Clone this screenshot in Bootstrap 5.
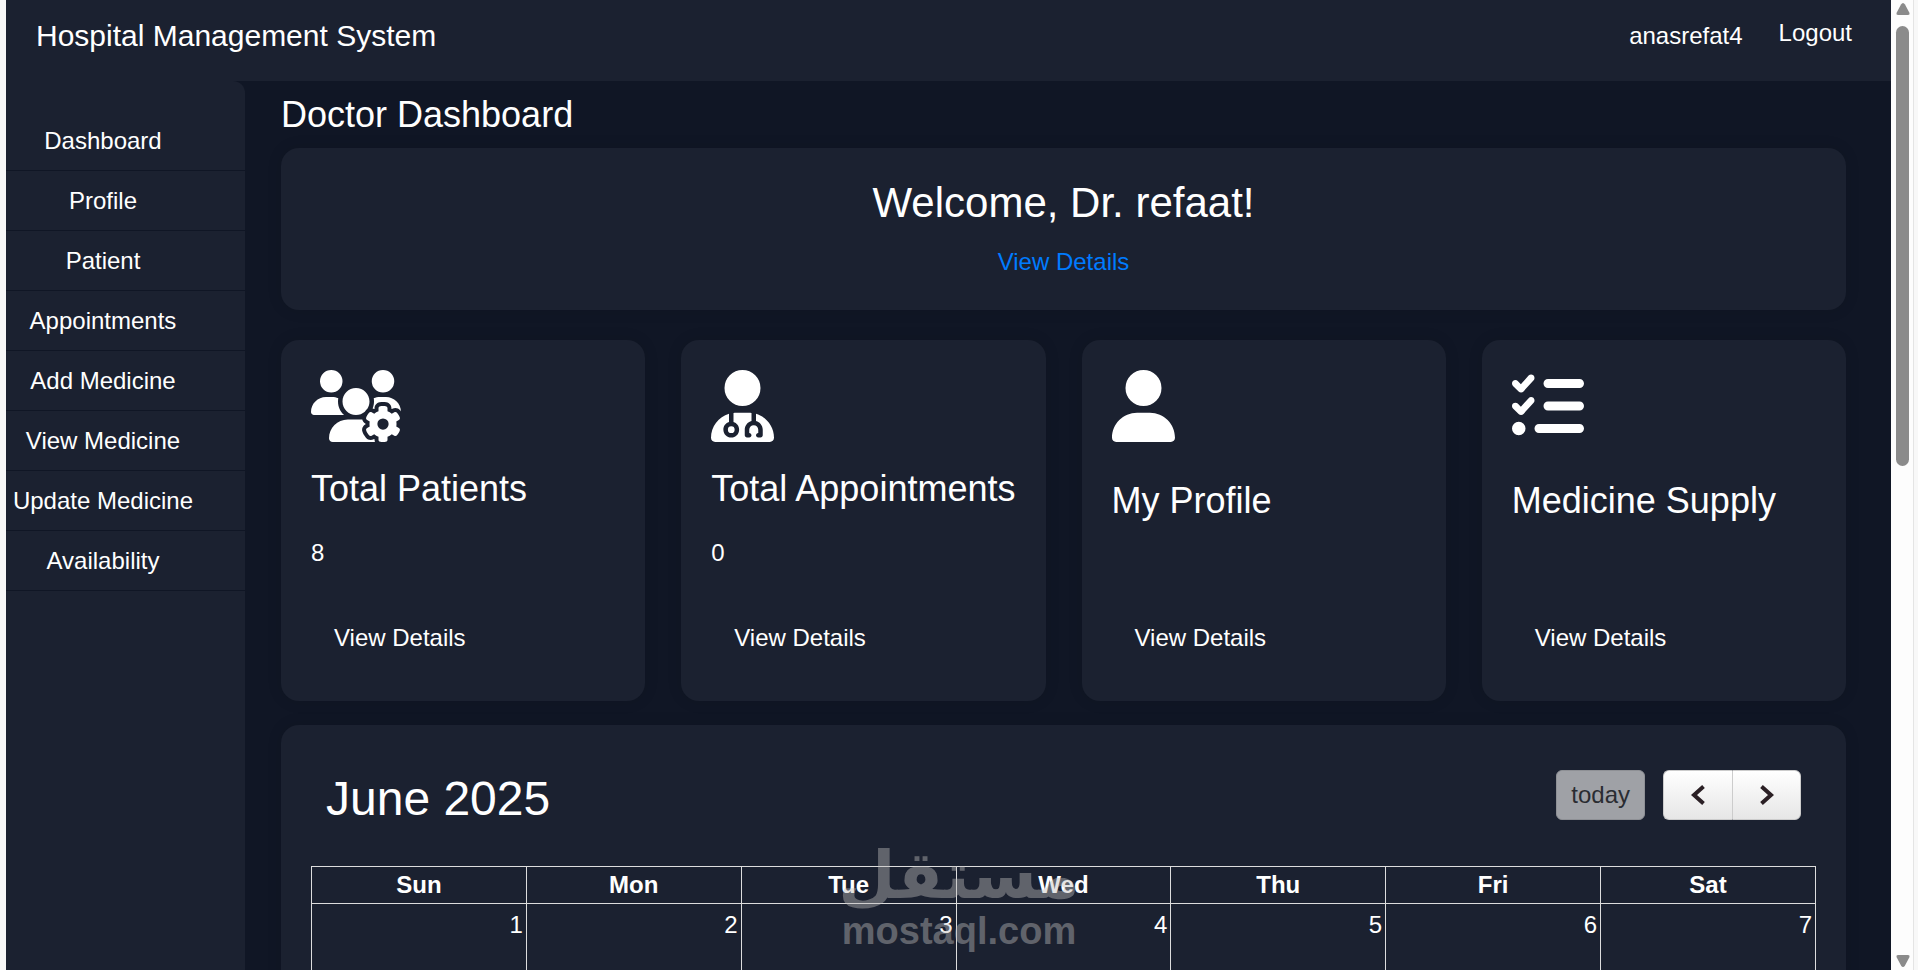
<!DOCTYPE html>
<html lang="en">
<head>
<meta charset="utf-8">
<meta name="viewport" content="width=device-width, initial-scale=1">
<title>Doctor Dashboard</title>
<link href="https://cdn.jsdelivr.net/npm/bootstrap@5.3.0/dist/css/bootstrap.min.css" rel="stylesheet">
<style>
:root { --panel: #1b2130; --page: #101625; }
body { font-family: "Liberation Sans", Arial, sans-serif; font-size: 24px; line-height: 36px; color: #fff; background: var(--page); }
h1, h2, h3, h4, p, ul { margin: 0; }
h1, h2, h3, h4 { font-weight: 400; }
a { text-decoration: none; }
.edge { width: 6px; background: #f8f8f8; }
.topbar { height: 81px; padding: 15px 39px 0 30px; background: var(--panel); }
.brand { font-size: 30px; padding-top: 3px; color: #fff; }
.user-name { padding-top: 3px; }
.side { width: 239px; padding-top: 30px; background: var(--panel); border-top-right-radius: 12px; }
.side li { border-bottom: 1px solid var(--page); }
.side .nav-link { padding: 12px 0 11px; margin-right: 45px; text-align: center; color: #fff; white-space: nowrap; }
.content { padding: 12px 45px 0 36px; }
.page-title { font-size: 36px; line-height: 43px; margin-bottom: 12px; }
.panel { background: var(--panel); border-radius: 18px; padding: 30px; box-shadow: 0 0 15px rgba(0, 0, 0, .1); }
.welcome { margin-bottom: 30px; }
.welcome h2 { font-size: 42px; line-height: 50px; margin-bottom: 16px; }
.welcome a { color: #007bff; }
.stats { --bs-gutter-x: 36px; margin-bottom: 24px; }
.stat-icon { height: 72px; display: block; fill: #fff; align-self: flex-start; }
.stat-title { font-size: 36px; line-height: 43px; margin-top: 25px; white-space: nowrap; }
.plain .stat-title { margin-top: 37px; }
.stat-value { margin: 25px 0 34px; }
.stat-link { padding: 15px 23px; color: #fff; }
.calendar { border-radius: 18px 18px 0 0; }
.cal-bar { padding: 15px; margin-bottom: 23px; }
.cal-bar h2 { font-size: 48px; line-height: 58px; }
.cal-btn { height: 50px; border: 1px solid #ccc; background: linear-gradient(#fff, #e6e6e6); color: #333; border-radius: 6px; padding: 0 14px; }
.cal-btn:disabled { opacity: .65; background: #e6e6e6; color: #333; border-color: #ccc; }
.cal-btn.arrow { width: 69px; }
.cal-btn svg { display: block; margin: auto; fill: none; stroke: #2b2025; stroke-width: 4; }
.today { margin-right: 18px; }
.month { width: 100%; table-layout: fixed; border-collapse: collapse; }
.month th, .month td { border: 1px solid #ddd; }
.month th { text-align: center; padding: 0; }
.month td { text-align: right; vertical-align: top; padding: 3px 3px 0; height: 150px; }
.watermark { position: absolute; left: 50%; bottom: 20px; transform: translateX(-50%); color: #c0bebe; opacity: .42; font-weight: 700; text-align: center; pointer-events: none; }
.watermark .word { font-family: "DejaVu Sans", sans-serif; font-size: 66px; line-height: 72px; }
.watermark .site { font-size: 38px; line-height: 38px; }
.scroller { width: 27px; padding: 3px 9px 3px 5px; background: linear-gradient(90deg, #fdfdfd 22px, #e4e4e4 22px, #e4e4e4 23px, #f8f8f8 23px); }
.scroller .thumb { width: 13px; height: 45.6%; margin-top: 11px; border-radius: 7px; background: #8b8b8b; }
.scroller svg { fill: #8b8b8b; display: block; }
</style>
</head>
<body class="vh-100 overflow-hidden">
<div class="d-flex h-100 position-relative">
  <div class="edge flex-shrink-0"></div>
  <div class="flex-grow-1 d-flex flex-column overflow-hidden">
    <header class="topbar d-flex align-items-start flex-shrink-0">
      <a class="brand me-auto" href="#">Hospital Management System</a>
      <span class="user-name me-4 pe-2">anasrefat4</span>
      <a class="text-white ps-1" href="#">Logout</a>
    </header>
    <div class="d-flex flex-grow-1 overflow-hidden">
      <nav class="side flex-shrink-0">
        <ul class="list-unstyled">
          <li><a class="nav-link" href="#">Dashboard</a></li>
          <li><a class="nav-link" href="#">Profile</a></li>
          <li><a class="nav-link" href="#">Patient</a></li>
          <li><a class="nav-link" href="#">Appointments</a></li>
          <li><a class="nav-link" href="#">Add Medicine</a></li>
          <li><a class="nav-link" href="#">View Medicine</a></li>
          <li><a class="nav-link" href="#">Update Medicine</a></li>
          <li><a class="nav-link" href="#">Availability</a></li>
        </ul>
      </nav>
      <main class="content flex-grow-1">
        <h1 class="page-title">Doctor Dashboard</h1>
        <section class="panel welcome text-center">
          <h2>Welcome, Dr. refaat!</h2>
          <a class="d-block" href="#">View Details</a>
        </section>
        <div class="row row-cols-4 stats">
          <div class="col">
            <section class="panel h-100 d-flex flex-column align-items-start">
              <svg class="stat-icon" viewBox="0 0 640 512"><path d="M144 160A80 80 0 1 0 144 0a80 80 0 1 0 0 160zm368 0A80 80 0 1 0 512 0a80 80 0 1 0 0 160zM0 298.7C0 310.4 9.6 320 21.3 320H234.7c.2 0 .4 0 .7 0c-26.6-23.5-43.3-57.8-43.3-96c0-7.6 .7-15 1.9-22.3c-13.6-6.3-28.7-9.7-44.6-9.7H106.7C47.8 192 0 239.8 0 298.7zM320 320c24 0 45.9-8.8 62.7-23.3c2.5-3.7 5.2-7.3 8-10.7c2.7-3.3 5.7-6.1 9-8.3C410 262.3 416 243.9 416 224c0-53-43-96-96-96s-96 43-96 96s43 96 96 96zm65.4 60.2c-10.3-5.9-18.1-16.2-20.8-28.2H261.3C187.7 352 128 411.7 128 485.3c0 14.7 11.9 26.7 26.7 26.7H455.2c-2.1-5.2-3.2-10.9-3.2-16.4v-3c-1.3-.7-2.7-1.5-4-2.3l-2.6 1.5c-16.8 9.7-40.5 8-54.7-9.7c-4.5-5.6-8.6-11.5-12.4-17.6l-.1-.2-.1-.2-2.4-4.1-.1-.2-.1-.2c-3.4-6.2-6.4-12.6-9-19.3c-8.2-21.2 2.2-42.6 19-52.3l2.7-1.5c0-.8 0-1.5 0-2.3s0-1.5 0-2.3l-2.7-1.5zM533.3 192H490.7c-15.9 0-31 3.5-44.6 9.7c1.3 7.2 1.9 14.7 1.9 22.3c0 17.4-3.5 33.9-9.7 49c2.5 .9 4.9 2 7.1 3.3l2.6 1.5c1.3-.8 2.6-1.6 4-2.3v-3c0-19.4 13.3-39.1 35.8-42.6c7.9-1.2 16-1.9 24.2-1.9s16.3 .6 24.2 1.9c22.5 3.5 35.8 23.2 35.8 42.6v3c1.3 .7 2.7 1.5 4 2.3l2.6-1.5c16.8-9.7 40.5-8 54.7 9.7c2.3 2.8 4.5 5.8 6.6 8.7c-2.1-57.1-49-102.7-106.6-102.7zm91.3 163.9c6.3-3.6 9.5-11.1 6.8-18c-2.1-5.5-4.6-10.8-7.4-15.9l-2.3-4c-3.1-5.1-6.5-9.9-10.2-14.5c-4.6-5.7-12.7-6.7-19-3L574.4 311c-8.9-7.6-19.1-13.6-30.4-17.6v-21c0-7.3-4.9-13.8-12.1-14.9c-6.5-1-13.1-1.5-19.9-1.5s-13.4 .5-19.9 1.5c-7.2 1.1-12.1 7.6-12.1 14.9v21c-11.2 4-21.5 10-30.4 17.6l-18.2-10.5c-6.3-3.6-14.4-2.6-19 3c-3.7 4.6-7.1 9.5-10.2 14.6l-2.3 3.9c-2.8 5.1-5.3 10.4-7.4 15.9c-2.6 6.8 .5 14.3 6.8 17.9l18.2 10.5c-1 5.7-1.6 11.6-1.6 17.6s.6 11.9 1.6 17.5l-18.2 10.5c-6.3 3.6-9.5 11.1-6.8 17.9c2.1 5.5 4.6 10.7 7.4 15.8l2.4 4.1c3 5.1 6.4 9.9 10.1 14.5c4.6 5.7 12.7 6.7 19 3L449.6 457c8.9 7.6 19.2 13.6 30.4 17.6v21c0 7.3 4.9 13.8 12.1 14.9c6.5 1 13.1 1.5 19.9 1.5s13.4-.5 19.9-1.5c7.2-1.1 12.1-7.6 12.1-14.9v-21c11.2-4 21.5-10 30.4-17.6l18.2 10.5c6.3 3.6 14.4 2.6 19-3c3.7-4.6 7.1-9.4 10.1-14.5l2.4-4.2c2.8-5.1 5.3-10.3 7.4-15.8c2.6-6.8-.5-14.3-6.8-17.9l-18.2-10.5c1-5.7 1.6-11.6 1.6-17.5s-.6-11.9-1.6-17.6l18.2-10.5zM472 384a40 40 0 1 1 80 0 40 40 0 1 1 -80 0z"/></svg>
              <h3 class="stat-title">Total Patients</h3>
              <p class="stat-value">8</p>
              <a class="stat-link mt-auto" href="#">View Details</a>
            </section>
          </div>
          <div class="col">
            <section class="panel h-100 d-flex flex-column align-items-start">
              <svg class="stat-icon" viewBox="0 0 448 512"><path d="M224 256A128 128 0 1 0 224 0a128 128 0 1 0 0 256zm-96 55.2C54 332.9 0 401.3 0 482.3C0 498.7 13.3 512 29.7 512H418.3c16.4 0 29.7-13.3 29.7-29.7c0-81-54-149.4-128-171.1V362c27.6 7.1 48 32.2 48 62v40c0 8.8-7.2 16-16 16H336c-8.8 0-16-7.2-16-16s7.2-16 16-16V424c0-17.7-14.3-32-32-32s-32 14.3-32 32v24c8.8 0 16 7.2 16 16s-7.2 16-16 16H256c-8.8 0-16-7.2-16-16V424c0-29.8 20.4-54.9 48-62V304.9c-6-.6-12.1-.9-18.3-.9H178.3c-6.2 0-12.3 .3-18.3 .9v65.4c23.1 6.9 40 28.3 40 53.7c0 30.9-25.1 56-56 56s-56-25.1-56-56c0-25.4 16.9-46.8 40-53.7V311.2zM144 448a24 24 0 1 0 0-48 24 24 0 1 0 0 48z"/></svg>
              <h3 class="stat-title">Total Appointments</h3>
              <p class="stat-value">0</p>
              <a class="stat-link mt-auto" href="#">View Details</a>
            </section>
          </div>
          <div class="col">
            <section class="panel plain h-100 d-flex flex-column align-items-start">
              <svg class="stat-icon" viewBox="0 0 448 512"><path d="M224 256A128 128 0 1 0 224 0a128 128 0 1 0 0 256zm-45.7 48C79.8 304 0 383.8 0 482.3C0 498.7 13.3 512 29.7 512H418.3c16.4 0 29.7-13.3 29.7-29.7C448 383.8 368.2 304 269.7 304H178.3z"/></svg>
              <h3 class="stat-title">My Profile</h3>
              <a class="stat-link mt-auto" href="#">View Details</a>
            </section>
          </div>
          <div class="col">
            <section class="panel plain h-100 d-flex flex-column align-items-start">
              <svg class="stat-icon" viewBox="0 0 512 512"><path d="M152.1 38.2c9.9 8.9 10.7 24 1.8 33.9l-72 80c-4.4 4.9-10.6 7.8-17.2 7.9s-12.9-2.4-17.6-7L7 113C-2.3 103.6-2.3 88.4 7 79s24.6-9.4 33.9 0l22.1 22.1 55.1-61.2c8.9-9.9 24-10.7 33.9-1.8zm0 160c9.9 8.9 10.7 24 1.8 33.9l-72 80c-4.4 4.9-10.6 7.8-17.2 7.9s-12.9-2.4-17.6-7L7 273c-9.4-9.4-9.4-24.6 0-33.9s24.6-9.4 33.9 0l22.1 22.1 55.1-61.2c8.9-9.9 24-10.7 33.9-1.8zM224 96c0-17.7 14.3-32 32-32H480c17.7 0 32 14.3 32 32s-14.3 32-32 32H256c-17.7 0-32-14.3-32-32zm0 160c0-17.7 14.3-32 32-32H480c17.7 0 32 14.3 32 32s-14.3 32-32 32H256c-17.7 0-32-14.3-32-32zM160 416c0-17.7 14.3-32 32-32H480c17.7 0 32 14.3 32 32s-14.3 32-32 32H192c-17.7 0-32-14.3-32-32zM48 368a48 48 0 1 1 0 96 48 48 0 1 1 0-96z"/></svg>
              <h3 class="stat-title">Medicine Supply</h3>
              <a class="stat-link mt-auto" href="#">View Details</a>
            </section>
          </div>
        </div>
        <section class="panel calendar">
          <div class="cal-bar d-flex align-items-start">
            <h2 class="me-auto">June 2025</h2>
            <button class="cal-btn today" type="button" disabled>today</button>
            <div class="d-flex">
              <button class="cal-btn arrow rounded-end-0 border-end-0" type="button" aria-label="Previous month"><svg width="14" height="20" viewBox="0 0 14 20"><path d="M12.500 1.500L3 10l9.500 8.500"/></svg></button>
              <button class="cal-btn arrow rounded-start-0" type="button" aria-label="Next month"><svg width="14" height="20" viewBox="0 0 14 20"><path d="M1.500 1.500L11 10l-9.500 8.500"/></svg></button>
            </div>
          </div>
          <table class="month">
            <thead>
              <tr><th>Sun</th><th>Mon</th><th>Tue</th><th>Wed</th><th>Thu</th><th>Fri</th><th>Sat</th></tr>
            </thead>
            <tbody>
              <tr><td>1</td><td>2</td><td>3</td><td>4</td><td>5</td><td>6</td><td>7</td></tr>
            </tbody>
          </table>
        </section>
      </main>
    </div>
  </div>
  <div class="scroller flex-shrink-0 d-flex flex-column" aria-hidden="true">
    <svg width="14" height="12" viewBox="0 0 14 12"><path d="M7 0Q8 0 9 1.500L13.500 10Q14 12 12 12H2Q0 12 .5 10L5 1.500Q6 0 7 0z"/></svg>
    <div class="thumb"></div>
    <svg class="mt-auto" width="14" height="12" viewBox="0 0 14 12"><path d="M7 12Q6 12 5 10.500L.5 2Q0 0 2 0H12Q14 0 13.500 2L9 10.500Q8 12 7 12z"/></svg>
  </div>
  <div class="watermark">
    <div class="word" lang="ar" dir="rtl">مستقل</div>
    <div class="site">mostaql.com</div>
  </div>
</div>
<script src="https://cdn.jsdelivr.net/npm/bootstrap@5.3.0/dist/js/bootstrap.bundle.min.js"></script>
</body>
</html>
